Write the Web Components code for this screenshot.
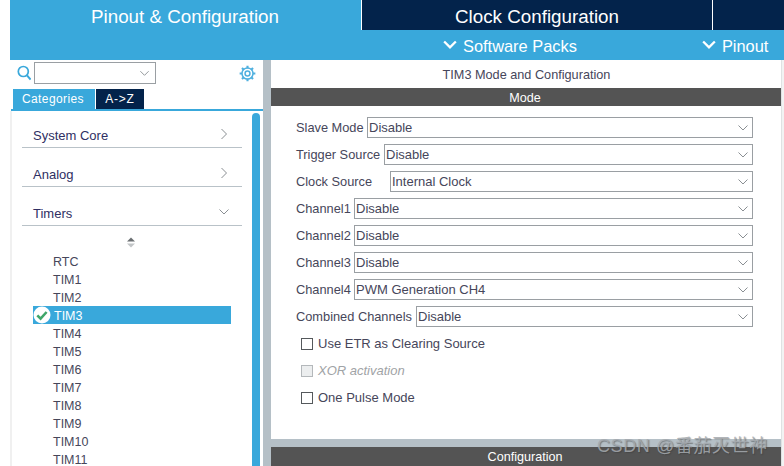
<!DOCTYPE html>
<html><head><meta charset="utf-8"><style>
html,body{margin:0;padding:0;background:#fff;overflow:hidden}
body{width:784px;height:466px;font-family:"Liberation Sans",Arial,sans-serif}
</style></head><body>
<cube-app></cube-app>
<script>
const chev=(d,c,w,s)=>`<svg width="${s}" height="${s}" viewBox="0 0 12 12" fill="none" stroke="${c}" stroke-width="${w}"><path d="${d}"/></svg>`;
const DOWN="M1.5 3.5 6 8 10.5 3.5", RIGHT="M3.5 1 8.5 6 3.5 11";
function def(name,css,html,init){
  customElements.define(name,class extends HTMLElement{
    constructor(){super();const r=this.attachShadow({mode:"open"});r.innerHTML=`<style>${css}</style>`+(typeof html==="function"?html(this):html);}
    connectedCallback(){ if(init&&!this._i){this._i=1;init(this);} }
  });
}
def("top-tabs",`
:host{display:grid;grid-template-columns:351px 1px 350px 1px 1fr;height:30px;background:#fff}
div{display:flex;align-items:center;justify-content:center;color:#fff;font-size:18.8px;padding-top:3px;box-sizing:border-box}
.a{background:#39a8db}.d{background:#03234b}.l{background:#fff}
.a{padding-left:0;padding-right:1px}
`,`<div class="a">Pinout &amp; Configuration</div><div class="l"></div><div class="d">Clock Configuration</div><div class="l"></div><div class="d"></div>`);
def("sub-bar",`
:host{display:flex;height:30px;box-sizing:border-box;padding-top:3px;background:#39a8db;color:#fff;font-size:16.4px;align-items:center}
span{display:flex;align-items:center;gap:6px;position:relative}
.a{margin-left:433px}.b{margin-left:125px}
svg{display:block;margin-top:-3px}
`,`<span class="a">${chev("M1 3 6 8 11 3","#fff",2,14)}Software Packs</span><span class="b">${chev("M1 3 6 8 11 3","#fff",2,14)}Pinout</span>`);
def("search-row",`
:host{display:flex;height:29px;box-sizing:border-box;padding:2px 7px 0 7px;align-items:flex-start}
.s{margin:3px 3px 0 0;display:block}
.c{width:122px;height:22px;box-sizing:border-box;border:1px solid #9a9fa3;background:#fff;display:flex;justify-content:flex-end;align-items:center;padding-right:5px}
.g{margin:3px 0 0 auto;display:block}
`,`<svg class="s" width="14" height="16" viewBox="0 0 14 16" fill="none" stroke="#39a8db"><circle cx="6.3" cy="6.5" r="5" stroke-width="1.7"/><path d="M10 10.3 13.6 14.6" stroke-width="2"/></svg>
<div class="c">${chev(DOWN,"#8a8f93",1,11)}</div>
<svg class="g" width="17" height="17" viewBox="0 0 16 16" fill="none" stroke="#4fb0df"><circle cx="8" cy="8" r="2.3" stroke-width="1.4"/><circle cx="8" cy="8" r="5.2" stroke-width="1.4"/><path d="M8 .6V3M8 13V15.4M.6 8H3M13 8H15.4M2.8 2.8 4.5 4.5M11.5 11.5 13.2 13.2M2.8 13.2 4.5 11.5M11.5 4.5 13.2 2.8" stroke-width="2"/></svg>`);
def("view-tabs",`
:host{display:block;height:22px;box-sizing:border-box;padding-left:1px}
.r{display:flex;height:20px;padding-left:2px;gap:1px}
.t{color:#fff;font-size:12px;letter-spacing:.4px;display:flex;align-items:center;justify-content:center;padding-bottom:1px;box-sizing:border-box}
.z{letter-spacing:.75px}
.c{width:82px;background:#39a8db;padding-right:2px}.z{width:48px;background:#03234b}
.l{height:2px;background:#39a8db}
`,`<div class="r"><div class="t c">Categories</div><div class="t z">A-&gt;Z</div></div><div class="l"></div>`);
def("tree-group",`
:host{display:block;margin-left:10px;width:220px;height:39px;box-sizing:border-box;border-bottom:1px solid #b9c2c8;position:relative;color:#2f2f63;font-size:13px}
.r{display:flex;height:100%;box-sizing:border-box;padding:0 12px 0 11px;align-items:center;justify-content:space-between}
span{position:relative;top:7px}
svg{display:block;position:relative;top:6px}
`,h=>{const o=h.hasAttribute("open");return `<div class="r"><span><slot></slot></span>${chev(o?DOWN:RIGHT,"#8a8f93",1,12)}</div>`});
def("tree-item",`
:host{display:flex;align-items:center;height:18px;width:198px;margin-left:21px;box-sizing:border-box;padding:2px 0 0 20px;color:#46465a;font-size:12.5px;position:relative}
:host([sel]){background:#39a8db;color:#fff;padding-left:21px}
svg{position:absolute;left:0;top:0}
`,h=>`${h.hasAttribute("sel")?`<svg width="18" height="18" viewBox="0 0 18 18"><circle cx="9" cy="9" r="8.5" fill="#fff"/><path d="M4.3 9.3 7.6 12.6 13.6 6" fill="none" stroke="#3fa66a" stroke-width="2.6"/></svg>`:""}<slot></slot>`);
def("side-bar",`
:host{display:flex;flex-direction:column;height:100%;overflow:hidden;background:#fff}
.b{flex:1;display:grid;grid-template-columns:1fr 8px;position:relative;padding-right:3px;border-left:2px solid #f0f0f0;min-height:0}
.m{overflow:hidden}
.bar{background:#39a8db;border-radius:5px 5px 0 0;margin-top:2px}
.u{height:26px;padding:11px 0 0 114px;box-sizing:border-box}
.u svg{display:block}
.lst{display:flex;flex-direction:column}
tree-group:first-child{margin-top:-2px}
`,`<search-row></search-row><view-tabs></view-tabs>
<div class="b"><div class="m">
<tree-group>System Core</tree-group><tree-group>Analog</tree-group><tree-group open>Timers</tree-group>
<div class="u"><svg width="10" height="11" viewBox="0 0 10 11"><path d="M5 .5 9 4.5H1Z" fill="#6b6f72"/><path d="M5 10.5 9 6.5H1Z" fill="#c2c5c7"/></svg></div>
<div class="lst"><tree-item>RTC</tree-item><tree-item>TIM1</tree-item><tree-item>TIM2</tree-item><tree-item sel>TIM3</tree-item><tree-item>TIM4</tree-item><tree-item>TIM5</tree-item><tree-item>TIM6</tree-item><tree-item>TIM7</tree-item><tree-item>TIM8</tree-item><tree-item>TIM9</tree-item><tree-item>TIM10</tree-item><tree-item>TIM11</tree-item></div>
</div><div class="bar"></div></div>`);
def("dark-bar",`
:host{display:flex;align-items:center;justify-content:center;background:#545454;color:#fff;font-size:12.6px;box-sizing:border-box;padding:1px 2px 0 0}
`,`<slot></slot>`);
def("select-row",`
:host{display:flex;align-items:center;height:21px;margin-bottom:6px;color:#46465a;font-size:12.8px}
.l{white-space:nowrap}
.s{flex:1;height:21px;box-sizing:border-box;border:1px solid #9a9fa3;display:flex;align-items:center;justify-content:space-between;padding:0 3px 0 1px;background:#fff;font-size:13px}
svg{display:block}
`,h=>`<span class="l" style="width:${h.getAttribute("w")}px"><slot></slot></span><div class="s"><span>${h.getAttribute("v")}</span>${chev(DOWN,"#8a8f93",1,12)}</div>`);
def("check-row",`
:host{display:flex;align-items:center;gap:5px;height:21px;margin-bottom:6px;padding-left:5px;color:#46465a;font-size:13px}
i{display:block;width:12px;height:12px;box-sizing:border-box;border:1px solid #55595c;background:#fff}
:host([dis]){color:#9fa3a6;font-style:italic}
:host([dis]) i{border-color:#b4b8bb;background:#eceeef}
`,`<i></i><span><slot></slot></span>`);
def("config-panel",`
:host{display:flex;flex-direction:column;height:100%;background:#fff;overflow:hidden}
.t{height:28px;box-sizing:border-box;padding:1px 0 0 1px;display:flex;align-items:center;justify-content:center;color:#46465a;font-size:12.7px}
.wrap{display:grid;grid-template-columns:510px 1fr;flex:1;min-height:0}
.col{display:flex;flex-direction:column;min-height:0}
.f{height:333px;box-sizing:border-box;padding:11px 28px 0 25px;background:#fff}
.gap{height:8px;background:#b5c0c7}
dark-bar{height:18px}
.cfg{height:19px}
.sb{background:#f2f3f3;border-left:1px solid #dfe2e3}
`,`<div class="wrap"><div class="col">
<div class="t">TIM3 Mode and Configuration</div>
<dark-bar>Mode</dark-bar>
<div class="f">
<select-row w="71" v="Disable">Slave Mode</select-row>
<select-row w="88" v="Disable">Trigger Source</select-row>
<select-row w="94" v="Internal Clock">Clock Source</select-row>
<select-row w="58" v="Disable">Channel1</select-row>
<select-row w="58" v="Disable">Channel2</select-row>
<select-row w="58" v="Disable">Channel3</select-row>
<select-row w="58" v="PWM Generation CH4">Channel4</select-row>
<select-row w="120" v="Disable">Combined Channels</select-row>
<check-row>Use ETR as Clearing Source</check-row>
<check-row dis>XOR activation</check-row>
<check-row>One Pulse Mode</check-row>
</div>
<div class="gap"></div>
<dark-bar class="cfg">Configuration</dark-bar>
</div><div class="sb"></div></div>`);
def("cube-app",`
:host{display:grid;width:784px;height:466px;grid-template-columns:10px 1fr;grid-template-rows:60px 1fr;position:relative;overflow:hidden;background:#fff}
.top{grid-column:2}
.mid{display:grid;grid-template-columns:253px 8px 1fr;min-height:0;grid-column:2}
.v{background:#b5c0c7}
.wm{position:absolute;left:597px;top:435px;font-size:18px;line-height:22px;color:rgba(165,170,175,.85);font-family:"Liberation Sans","Noto Sans CJK SC",sans-serif;letter-spacing:.6px;white-space:nowrap;text-shadow:1px 1px 1px rgba(60,60,60,.5)}
`,`<div></div><div class="top"><top-tabs></top-tabs><sub-bar></sub-bar></div>
<div></div><div class="mid"><side-bar></side-bar><div class="v"></div><config-panel></config-panel></div>
<div class="wm">CSDN @番茄灭世神</div>`);
</script>
</body></html>
